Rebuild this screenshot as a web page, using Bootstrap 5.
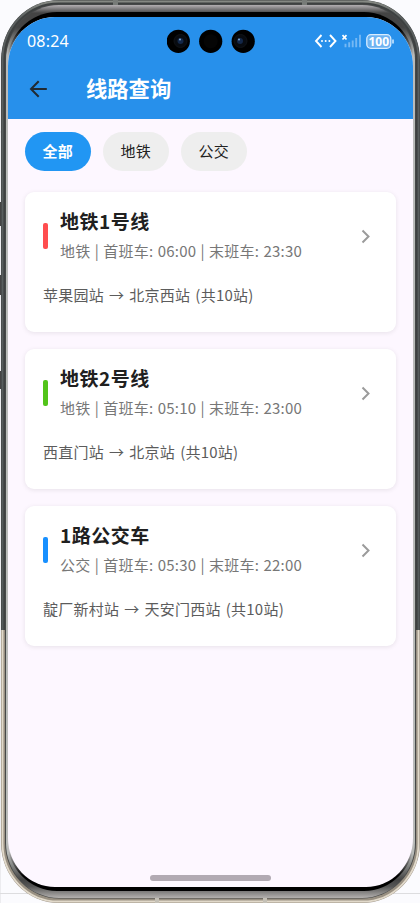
<!DOCTYPE html>
<html lang="zh-CN">
<head>
<meta charset="utf-8">
<meta name="viewport" content="width=device-width, initial-scale=1">
<title>线路查询</title>
<link href="https://cdn.jsdelivr.net/npm/bootstrap@5.3.0/dist/css/bootstrap.min.css" rel="stylesheet">
<style>
body{background:#fbfbfe;font-family:"Noto Sans CJK SC",sans-serif;width:420px;height:903px}
.bezel{z-index:0}
.phone-screen{z-index:1;width:405px;height:870px;margin:17px 0 0 8px;background:#fdf7ff;border-radius:47px/49px}
.top-area{background:#2790eb;height:102px}
.status-row{height:48px;padding:0 19px 0 19px}
.clock{font-size:16px;line-height:20px;font-family:"Noto Sans","Noto Sans CJK SC",sans-serif;letter-spacing:.2px}
.cameras{left:159px;top:12px}
.title-row{height:48px;padding-left:21px;gap:38px}
.page-title{font-size:21.3px;line-height:28px;font-weight:700;margin-top:-2px!important}
.chips{padding:13px 17px 0;gap:12.5px}
.chip{width:65.5px;height:39px;border-radius:20px;background:#eee;color:#222;font-size:15px;line-height:22px;border:0;padding:0 0 1px;letter-spacing:.2px}
.chip.on{background:#2196f3;color:#fff;font-weight:700}
.routes{padding:21px 17px 0;gap:17px}
.route{height:140px;border:0;border-radius:9px;box-shadow:0 1px 5px rgba(0,0,0,.09);padding:17px 18px 0 18px}
.stripe{width:4.5px;height:26px;border-radius:2px;margin-right:12.5px}
.red{background:#ff4d4f}.green{background:#52c41a}.blue{background:#1890ff}
.route-name{font-size:19px;line-height:28px;font-weight:700;color:#202020;letter-spacing:.5px;margin-top:-3px!important}
.hours{font-size:15px;line-height:22px;color:#777;letter-spacing:.22px;word-spacing:.72px;margin-top:4.5px;white-space:nowrap}
.path-line{font-size:15px;line-height:22px;color:#5c5c5c;letter-spacing:.22px;word-spacing:1.55px;margin-top:21px;white-space:nowrap}
.head-row{height:54px}
.home-bar{width:121px;height:6px;border-radius:3px;background:#b2aab3;margin:auto auto 6px 142px}
</style>
</head>
<body class="position-relative overflow-hidden">
<svg class="bezel position-absolute top-0 start-0" width="420" height="903" viewBox="0 0 420 903">
  <defs>
    <linearGradient id="rim" gradientUnits="userSpaceOnUse" x1="0" y1="0" x2="0" y2="903"><stop offset="0" stop-color="#3e4141"/><stop offset=".698" stop-color="#3e4141"/><stop offset=".698" stop-color="#999082"/><stop offset="1" stop-color="#999082"/></linearGradient>
    <linearGradient id="band" gradientUnits="userSpaceOnUse" x1="0" y1="0" x2="0" y2="903"><stop offset="0" stop-color="#898c86"/><stop offset=".02" stop-color="#5b6060"/><stop offset=".698" stop-color="#555b5c"/><stop offset=".698" stop-color="#e1d9ca"/><stop offset="1" stop-color="#e1d9ca"/></linearGradient>
    <linearGradient id="inner" gradientUnits="userSpaceOnUse" x1="0" y1="5" x2="0" y2="898"><stop offset="0" stop-color="#b3afb2"/><stop offset=".009" stop-color="#444"/><stop offset=".025" stop-color="#444"/><stop offset=".055" stop-color="#b8bbb8"/><stop offset=".95" stop-color="#b8bbb8"/><stop offset=".98" stop-color="#444"/><stop offset=".987" stop-color="#555"/><stop offset="1" stop-color="#b3b0ae"/></linearGradient>
    <linearGradient id="black" gradientUnits="userSpaceOnUse" x1="0" y1="12" x2="0" y2="891"><stop offset="0" stop-color="#000"/><stop offset=".02" stop-color="#000"/><stop offset=".05" stop-color="#bbb"/><stop offset=".955" stop-color="#bbb"/><stop offset=".983" stop-color="#000"/><stop offset="1" stop-color="#000"/></linearGradient>
  </defs>
  <path d="M0 49V903M0 132H2M0 893.500H420" stroke="#dddddf" fill="none"/>
  <path d="M.5 202V226M.5 275V295M.5 371V389" stroke="#444"/>
  <rect x="1" y="0" width="419" height="903" rx="58" ry="60" fill="url(#rim)"/>
  <rect x="2.500" y="1.500" width="416" height="900" rx="56" ry="58" fill="none" stroke="url(#band)" stroke-width="1.800"/>
  <rect x="5" y="4" width="411" height="894.500" rx="54" ry="56" fill="#464848"/>
  <rect x="6" y="5" width="409" height="893" rx="53" ry="55" fill="url(#inner)"/>
  <rect x="7" y="12" width="407" height="879" rx="50" ry="52" fill="url(#black)"/>
  <path d="M113 0h5v5h-5zM302 0h5v5h-5z" fill="#777b78"/>
  <path d="M155 898h4v5h-4zM263 898h4v5h-4z" fill="#c4c0b6"/>
</svg>
<main class="phone-screen position-relative overflow-hidden d-flex flex-column">
  <header class="top-area">
    <div class="status-row d-flex align-items-center justify-content-between text-white">
      <span class="clock">08:24</span>
      <svg width="80" height="18" viewBox="0 0 80 18" fill="none">
        <path d="M7.500 3 2 9l5.500 6M16 3l5.500 6L16 15" stroke="#fff" stroke-width="1.900"/>
        <g fill="#fff"><circle cx="8" cy="9" r="1"/><circle cx="11.700" cy="9" r="1"/><circle cx="15.400" cy="9" r="1"/></g>
        <path d="m28.500 3.200 4 4.300m0-4.300-4 4.300" stroke="#fff" stroke-width="1.700"/>
        <path d="M31.500 15.300v-3.500M35.200 15.300v-5M38.700 15.300V8.500M42.200 15.300V6M46 15.300V2.700" stroke="#75b8f4" stroke-width="1.900"/>
        <rect x="52.800" y="2.700" width="24" height="13.600" rx="4" fill="#6eb3f2" stroke="#d9edff" stroke-width="1.300"/>
        <path d="M79 7.500v4" stroke="#d9edff" stroke-width="1.500"/>
        <text x="54.500" y="14" textLength="20.500" font-family="Noto Sans,sans-serif" font-weight="700" font-size="12" fill="#fff">100</text>
      </svg>
    </div>
    <svg class="cameras position-absolute" width="90" height="25" viewBox="0 0 90 25">
      <g fill="#000"><circle cx="11.300" cy="12.300" r="11.600"/><circle cx="43.700" cy="12.300" r="11.600"/><circle cx="76.200" cy="12.300" r="11.600"/></g>
      <circle cx="43.700" cy="12.300" r="7" fill="#050505"/>
      <g fill="#080b10" stroke="#101317"><circle cx="13.500" cy="12" r="6.500"/><circle cx="73.500" cy="12" r="6.500"/></g>
      <g fill="#132748"><circle cx="13.500" cy="12" r="3"/><circle cx="73" cy="12" r="3"/></g>
      <g fill="#7ba5d5"><circle cx="13" cy="10.500" r="1"/><circle cx="72" cy="10.500" r="1"/></g>
    </svg>
    <div class="title-row d-flex align-items-center">
      <svg width="19" height="18" viewBox="0 0 19 18" fill="none" stroke="#202a33" stroke-width="2"><path d="M17.800 9H2.500M9.700 1.200 2 9l7.700 7.800"/></svg>
      <h1 class="page-title text-white m-0">线路查询</h1>
    </div>
  </header>
  <nav class="chips d-flex">
    <button class="chip on">全部</button><button class="chip">地铁</button><button class="chip">公交</button>
  </nav>
  <section class="routes d-flex flex-column">
    <article class="card route">
      <div class="head-row d-flex align-items-center">
        <span class="stripe red"></span>
        <div class="flex-grow-1"><h2 class="route-name m-0">地铁1号线</h2><div class="hours">地铁 | 首班车: 06:00 | 末班车: 23:30</div></div>
        <svg width="24" height="16" viewBox="0 0 24 16" fill="none" stroke="#9b9b9b" stroke-width="2"><path d="m8.500 2.500 6 6-6 6"/></svg>
      </div>
      <div class="path-line">苹果园站 → 北京西站 (共10站)</div>
    </article>
    <article class="card route">
      <div class="head-row d-flex align-items-center">
        <span class="stripe green"></span>
        <div class="flex-grow-1"><h2 class="route-name m-0">地铁2号线</h2><div class="hours">地铁 | 首班车: 05:10 | 末班车: 23:00</div></div>
        <svg width="24" height="16" viewBox="0 0 24 16" fill="none" stroke="#9b9b9b" stroke-width="2"><path d="m8.500 2.500 6 6-6 6"/></svg>
      </div>
      <div class="path-line">西直门站 → 北京站 (共10站)</div>
    </article>
    <article class="card route">
      <div class="head-row d-flex align-items-center">
        <span class="stripe blue"></span>
        <div class="flex-grow-1"><h2 class="route-name m-0">1路公交车</h2><div class="hours">公交 | 首班车: 05:30 | 末班车: 22:00</div></div>
        <svg width="24" height="16" viewBox="0 0 24 16" fill="none" stroke="#9b9b9b" stroke-width="2"><path d="m8.500 2.500 6 6-6 6"/></svg>
      </div>
      <div class="path-line">靛厂新村站 → 天安门西站 (共10站)</div>
    </article>
  </section>
  <div class="home-bar"></div>
</main>
<script src="https://cdn.jsdelivr.net/npm/bootstrap@5.3.0/dist/js/bootstrap.bundle.min.js"></script>
</body>
</html>
